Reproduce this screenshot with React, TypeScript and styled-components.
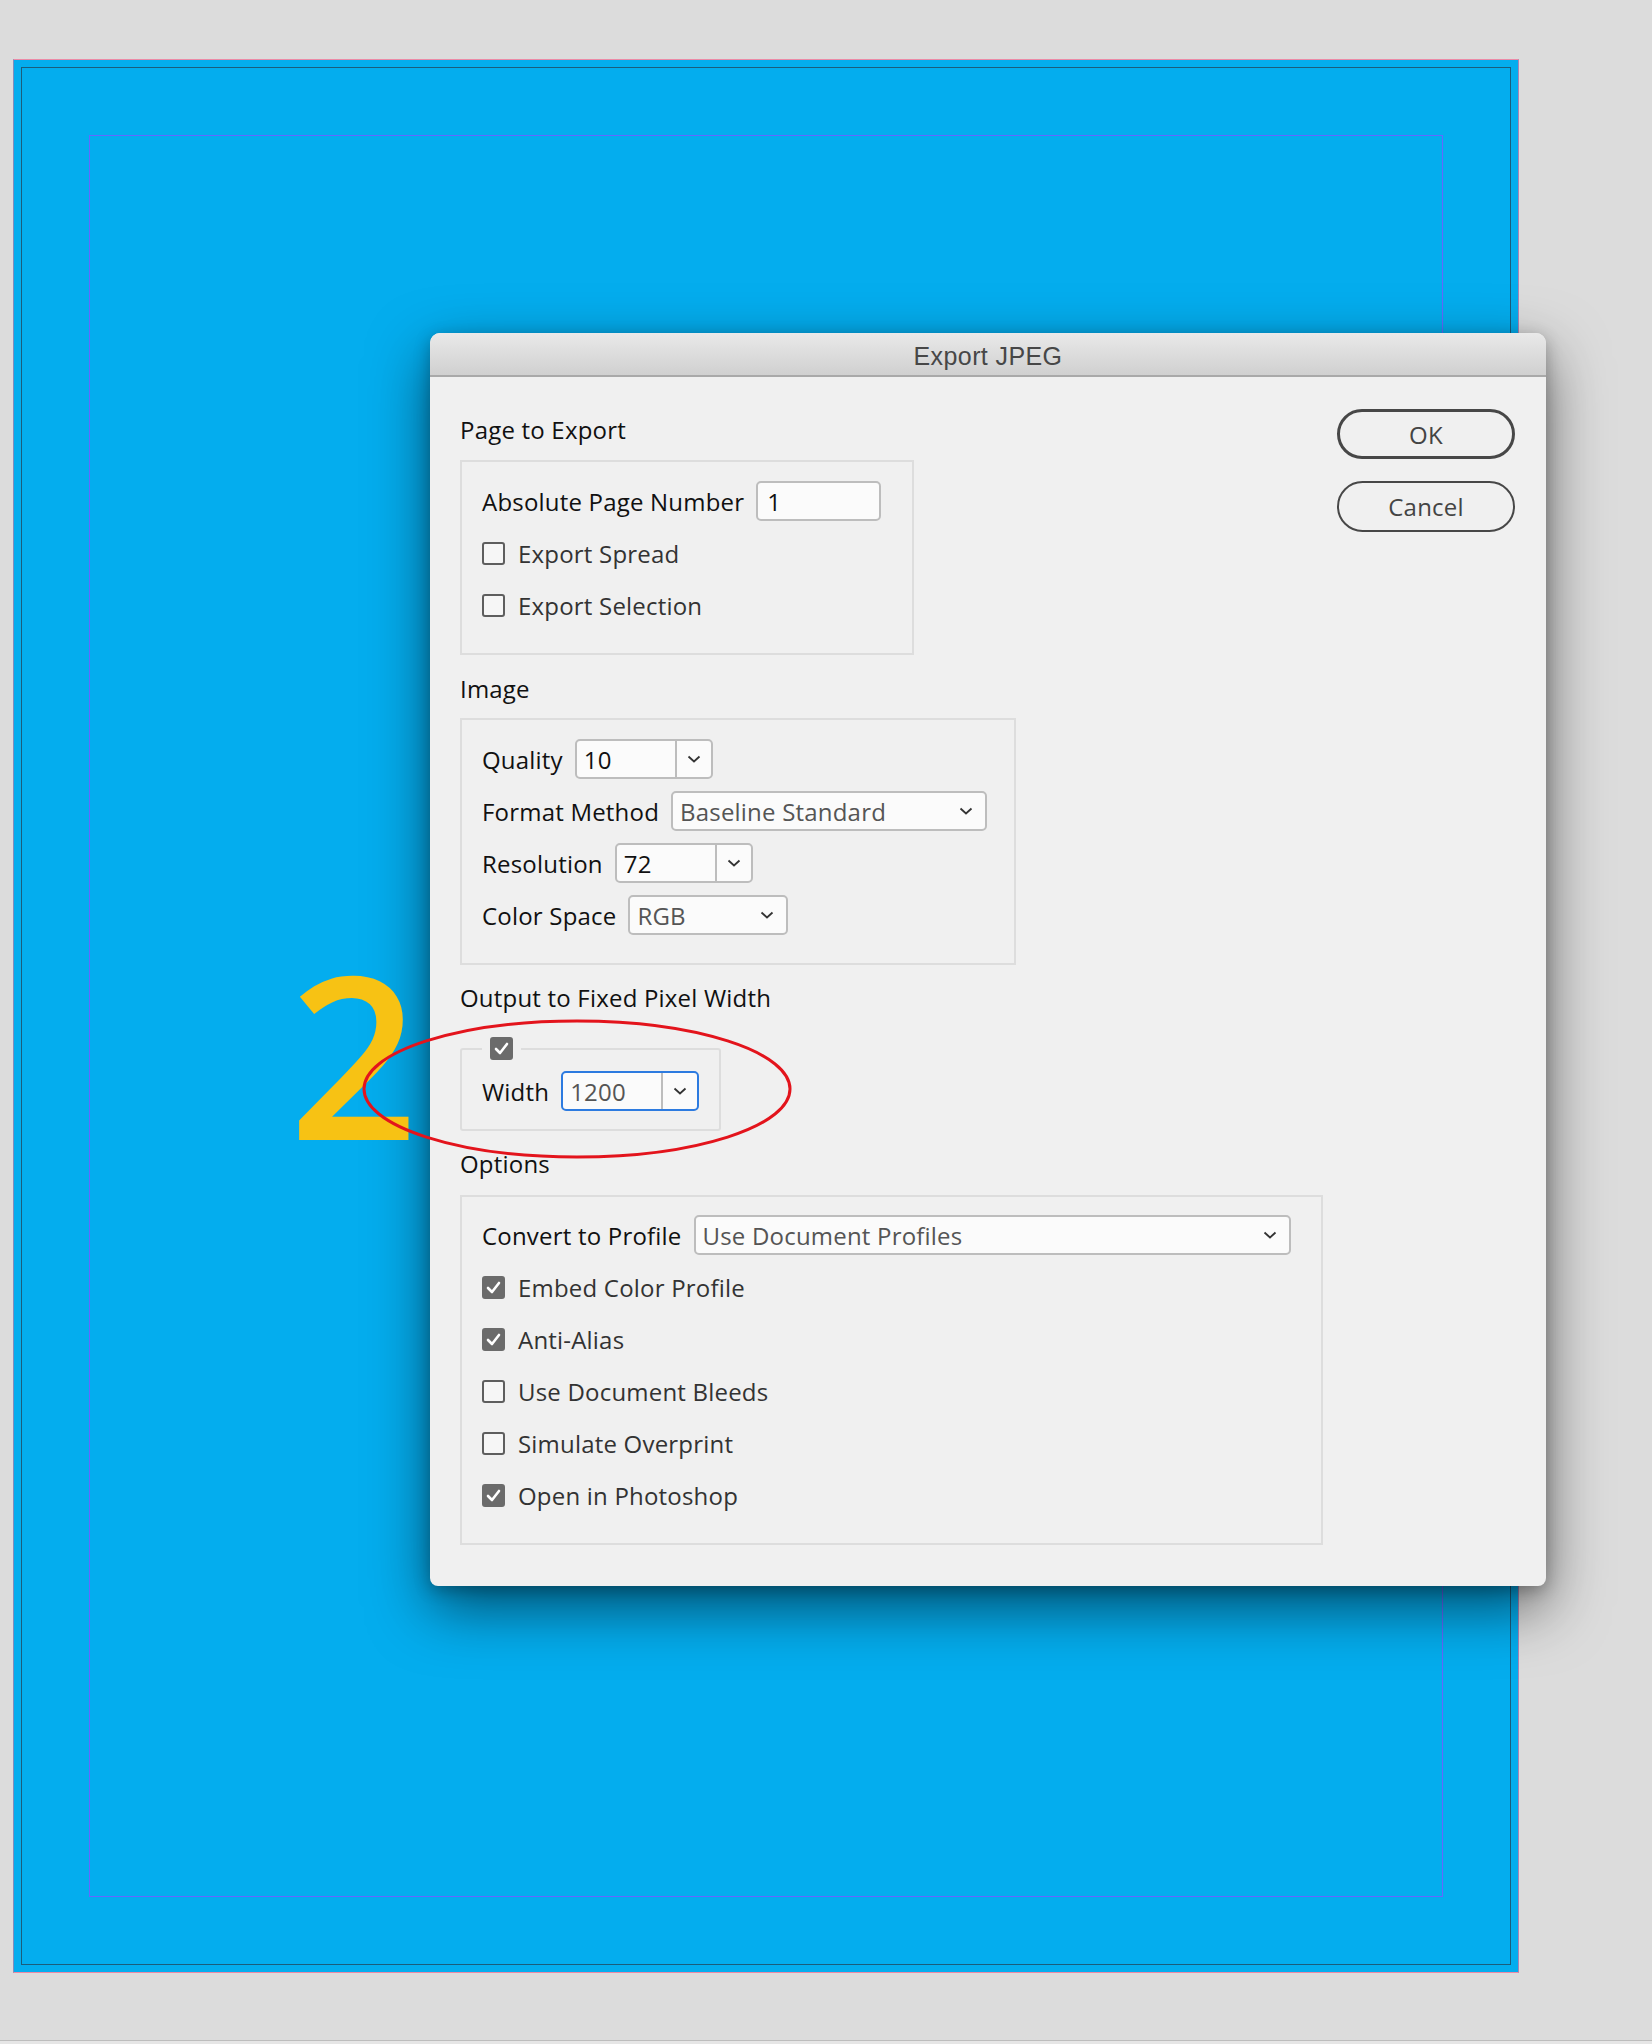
import React from 'react';
import styled, { createGlobalStyle } from 'styled-components';

const GlobalStyle = createGlobalStyle`
  html, body {
    margin: 0;
    padding: 0;
  }
  body {
    background: #e6e6e6;
    font-family: "Open Sans", "Noto Sans", sans-serif;
  }
`;

const Workspace = styled.div`
  position: relative;
  width: 1652px;
  height: 2041px;
  box-sizing: border-box;
  padding: 59px 0 0 13px;
  overflow: hidden;
  background: #dcdcdc;
  border-bottom: 1px solid #bdbdbd;
`;

// bleed area, page edge and margin guides of the layout page
const Bleed = styled.div`
  width: 1506px;
  height: 1914px;
  box-sizing: border-box;
  display: flex;
  padding: 7px;
  background: #04adee;
  border-top: 1px solid #ec8aa6;
  border-bottom: 1px solid #ec8aa6;
  border-left: 1px solid #7f8dbd;
  border-right: 1px solid #a984b4;
`;

const PageEdge = styled.div`
  flex: 1;
  display: flex;
  padding: 67px;
  border: 1px solid #1b5d7c;
`;

const MarginGuide = styled.div`
  flex: 1;
  border: 1px solid #6467ff;
`;

const Dialog = styled.div`
  position: absolute;
  left: 430px;
  top: 333px;
  width: 1116px;
  background: #f0f0f0;
  border-radius: 10px 10px 8px 8px;
  box-shadow: 0 22px 60px rgba(0, 0, 0, 0.55), 0 4px 16px rgba(0, 0, 0, 0.25);
  overflow: hidden;
`;

const TitleBar = styled.div`
  height: 44px;
  box-sizing: border-box;
  padding-top: 4px;
  display: flex;
  align-items: center;
  justify-content: center;
  background: linear-gradient(#e9e9e9, #d0d0d0);
  border-bottom: 2px solid #a9a9a9;
  font-family: "Liberation Sans", Arial, sans-serif;
  font-size: 25px;
  letter-spacing: 0.4px;
  color: #474747;
`;

const Body = styled.div`
  display: flex;
  justify-content: space-between;
  padding: 38px 31px 41px 30px;
  font-weight: 500;
  letter-spacing: 0.2px;
`;

const Column = styled.div`
  display: flex;
  flex-direction: column;
  align-items: flex-start;
`;

const SectionLabel = styled.div<{ $top?: number; $bottom: number }>`
  font-size: 24px;
  line-height: 30px;
  color: #111;
  margin-top: ${(p) => p.$top ?? 0}px;
  margin-bottom: ${(p) => p.$bottom}px;
`;

const Group = styled.div<{ $w: number; $pt?: number }>`
  width: ${(p) => p.$w}px;
  box-sizing: border-box;
  display: flex;
  flex-direction: column;
  gap: 12px;
  padding: ${(p) => p.$pt ?? 19}px 20px 28px;
  border: 2px solid #dddddd;
`;

const FieldSet = styled.fieldset`
  width: 257px;
  box-sizing: border-box;
  margin: 24px 0 0;
  padding: 11px 20px 18px;
  border: 2px solid #dddddd;
  border-radius: 3px;
`;

const Legend = styled.legend`
  padding: 0 8px;
  display: flex;
`;

const Row = styled.div`
  display: flex;
  align-items: center;
  height: 40px;
  gap: 12px;
`;

const CheckRow = styled(Row)`
  gap: 13px;
`;

const FieldLabel = styled.span`
  font-size: 24px;
  color: #111;
  white-space: nowrap;
`;

const CheckLabel = styled.span`
  font-size: 24px;
  color: #333;
  white-space: nowrap;
`;

const TextInput = styled.div`
  width: 125px;
  height: 40px;
  box-sizing: border-box;
  display: flex;
  align-items: center;
  padding-left: 9px;
  border: 2px solid #bdbdbd;
  border-radius: 5px;
  background: #fbfbfb;
  font-size: 24px;
  color: #111;
`;

const Combo = styled.div<{ $w: number; $focus?: boolean }>`
  width: ${(p) => p.$w}px;
  height: 40px;
  box-sizing: border-box;
  display: flex;
  border: 2px solid ${(p) => (p.$focus ? '#2d7be0' : '#bdbdbd')};
  border-radius: 5px;
  background: #fbfbfb;
`;

const ComboValue = styled.div<{ $muted?: boolean }>`
  flex: 1;
  display: flex;
  align-items: center;
  padding-left: 7px;
  font-size: 24px;
  color: ${(p) => (p.$muted ? '#555' : '#111')};
  white-space: nowrap;
`;

const ComboButton = styled.div`
  width: 34px;
  display: flex;
  align-items: center;
  justify-content: center;
  border-left: 2px solid #bdbdbd;
`;

const DropButton = styled.div`
  width: 38px;
  display: flex;
  align-items: center;
  justify-content: center;
`;

const Box = styled.div<{ $checked?: boolean }>`
  width: 23px;
  height: 23px;
  box-sizing: border-box;
  display: flex;
  align-items: center;
  justify-content: center;
  border-radius: 3px;
  border: 2px solid ${(p) => (p.$checked ? '#6b6b6b' : '#5e5e5e')};
  background: ${(p) => (p.$checked ? '#6b6b6b' : '#f6f6f6')};
`;

const ButtonColumn = styled.div`
  display: flex;
  flex-direction: column;
  gap: 22px;
  margin-top: -6px;
`;

const PillButton = styled.div<{ $primary?: boolean }>`
  width: 178px;
  height: ${(p) => (p.$primary ? 50 : 51)}px;
  box-sizing: border-box;
  display: flex;
  align-items: center;
  justify-content: center;
  border: ${(p) => (p.$primary ? 3 : 2)}px solid #474747;
  border-radius: 26px;
  font-size: 24px;
  font-weight: 400;
  color: #444;
`;

const StepNumber = styled.div`
  position: absolute;
  left: 289px;
  top: 939px;
  font-family: "Open Sans", sans-serif;
  font-size: 226px;
  font-weight: 600;
  line-height: 1;
  color: #f7c214;
`;

const Highlight = styled.svg`
  position: absolute;
  left: 360px;
  top: 1016px;
`;

function Chevron() {
  return (
    <svg width="14" height="8" viewBox="0 0 14 8">
      <path d="M1.5 1.5l5.5 5 5.5-5" fill="none" stroke="#333" strokeWidth="1.8" />
    </svg>
  );
}

function Checkbox({ checked }: { checked?: boolean }) {
  return (
    <Box $checked={checked}>
      {checked && (
        <svg width="15" height="13" viewBox="0 0 15 13">
          <path d="M2 7l4 4 7-9" fill="none" stroke="#fff" strokeWidth="2.6" strokeLinecap="round" strokeLinejoin="round" />
        </svg>
      )}
    </Box>
  );
}

function ComboBox({ w, value, focus, muted }: { w: number; value: string; focus?: boolean; muted?: boolean }) {
  return (
    <Combo $w={w} $focus={focus}>
      <ComboValue $muted={muted}>{value}</ComboValue>
      <ComboButton>
        <Chevron />
      </ComboButton>
    </Combo>
  );
}

function Dropdown({ w, value }: { w: number; value: string }) {
  return (
    <Combo $w={w}>
      <ComboValue $muted>{value}</ComboValue>
      <DropButton>
        <Chevron />
      </DropButton>
    </Combo>
  );
}

function CheckItem({ label, checked }: { label: string; checked?: boolean }) {
  return (
    <CheckRow>
      <Checkbox checked={checked} />
      <CheckLabel>{label}</CheckLabel>
    </CheckRow>
  );
}

export default function App() {
  return (
    <>
      <GlobalStyle />
      <Workspace>
        <Bleed>
          <PageEdge>
            <MarginGuide />
          </PageEdge>
        </Bleed>

        <Dialog>
          <TitleBar>Export JPEG</TitleBar>
          <Body>
            <Column>
              <SectionLabel $bottom={15}>Page to Export</SectionLabel>
              <Group $w={454}>
                <Row>
                  <FieldLabel>Absolute Page Number</FieldLabel>
                  <TextInput>1</TextInput>
                </Row>
                <CheckItem label="Export Spread" />
                <CheckItem label="Export Selection" />
              </Group>

              <SectionLabel $top={19} $bottom={14}>Image</SectionLabel>
              <Group $w={556}>
                <Row>
                  <FieldLabel>Quality</FieldLabel>
                  <ComboBox w={138} value="10" />
                </Row>
                <Row>
                  <FieldLabel>Format Method</FieldLabel>
                  <Dropdown w={316} value="Baseline Standard" />
                </Row>
                <Row>
                  <FieldLabel>Resolution</FieldLabel>
                  <ComboBox w={138} value="72" />
                </Row>
                <Row>
                  <FieldLabel>Color Space</FieldLabel>
                  <Dropdown w={160} value="RGB" />
                </Row>
              </Group>

              <SectionLabel $top={18} $bottom={0}>Output to Fixed Pixel Width</SectionLabel>
              <FieldSet>
                <Legend>
                  <Checkbox checked />
                </Legend>
                <Row>
                  <FieldLabel>Width</FieldLabel>
                  <ComboBox w={138} value="1200" focus muted />
                </Row>
              </FieldSet>

              <SectionLabel $top={18} $bottom={16}>Options</SectionLabel>
              <Group $w={863} $pt={18}>
                <Row>
                  <FieldLabel>Convert to Profile</FieldLabel>
                  <Dropdown w={597} value="Use Document Profiles" />
                </Row>
                <CheckItem label="Embed Color Profile" checked />
                <CheckItem label="Anti-Alias" checked />
                <CheckItem label="Use Document Bleeds" />
                <CheckItem label="Simulate Overprint" />
                <CheckItem label="Open in Photoshop" checked />
              </Group>
            </Column>

            <ButtonColumn>
              <PillButton $primary>OK</PillButton>
              <PillButton>Cancel</PillButton>
            </ButtonColumn>
          </Body>
        </Dialog>

        <StepNumber>2</StepNumber>
        <Highlight width="434" height="146" viewBox="0 0 434 146">
          <ellipse cx="217" cy="73" rx="213" ry="68" fill="none" stroke="#e3141c" strokeWidth="3" />
        </Highlight>
      </Workspace>
    </>
  );
}
